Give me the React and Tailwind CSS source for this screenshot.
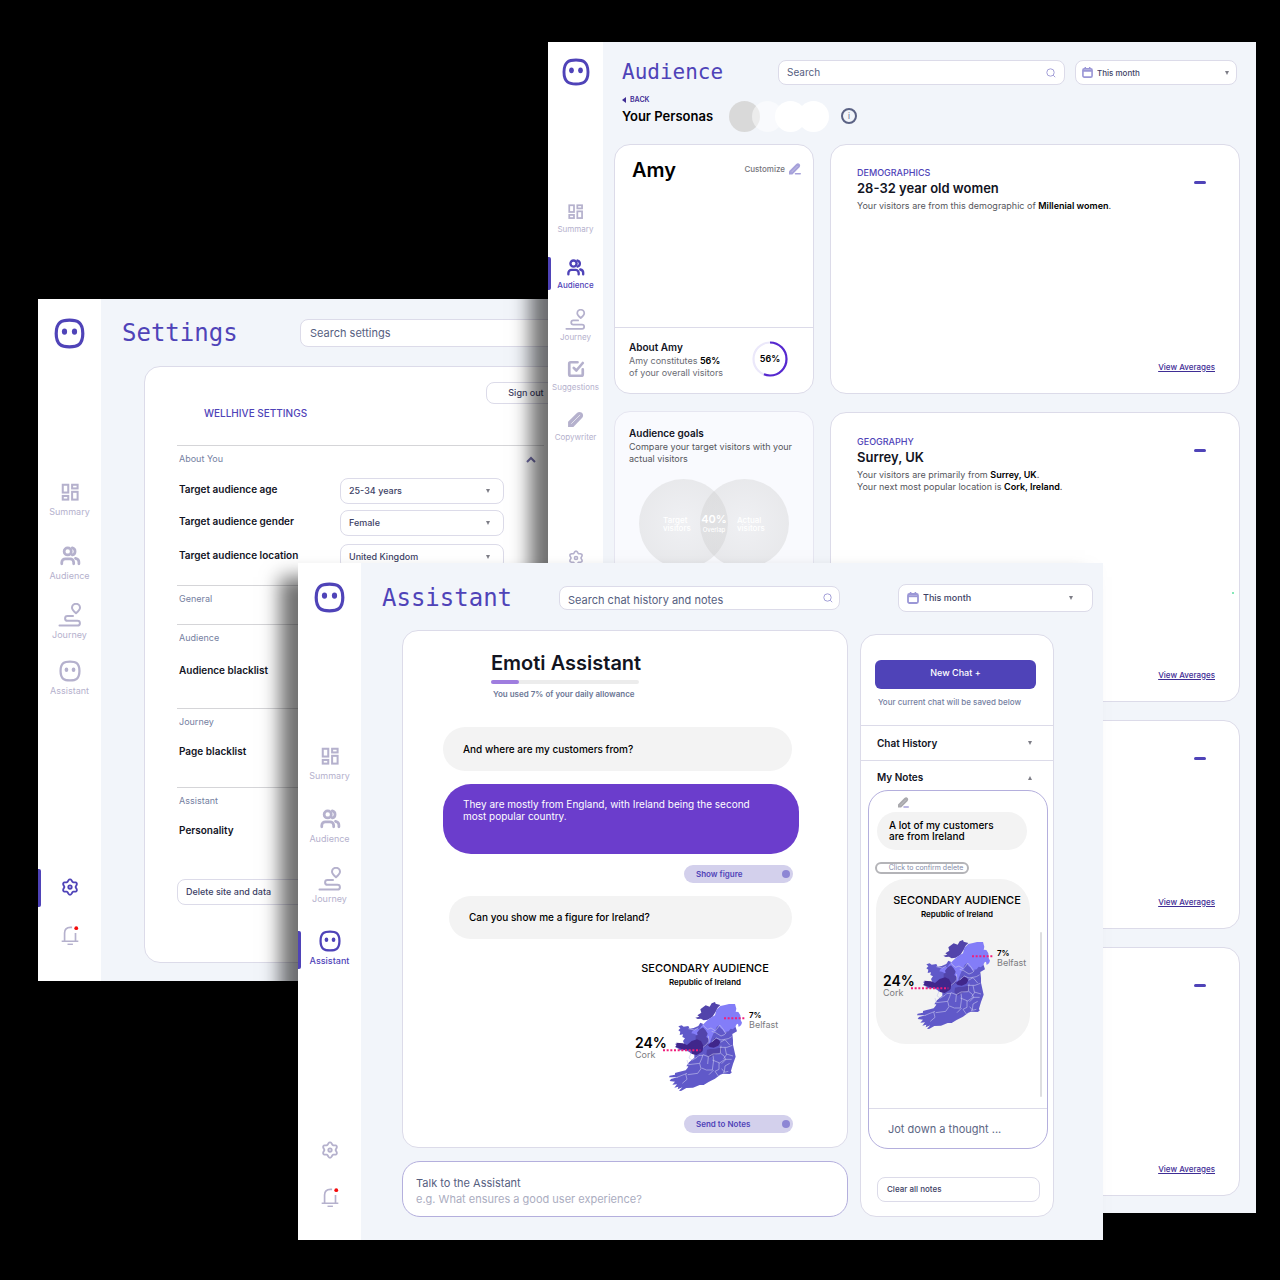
import React from "react";

/* ---------- icons ---------- */

function LogoIcon({ className }) {
  return (
    <svg viewBox="0 0 31 31" className={className} fill="none" aria-hidden="true">
      <path
        d="M15.500 2.200C19.500 2.200 22.500 2.400 25 4.500C28 7 28.800 10.500 28.800 15.500S28 24 25 26.500C22.500 28.600 19.500 28.800 15.500 28.800S8.500 28.600 6 26.500C3 24 2.200 20.500 2.200 15.500S3 7 6 4.500C8.500 2.400 11.500 2.200 15.500 2.200Z"
        stroke="currentColor"
        strokeWidth="3.200"
      />
      <ellipse cx="10.500" cy="13.600" rx="2.600" ry="3.200" fill="currentColor" />
      <ellipse cx="20.500" cy="13.600" rx="2.600" ry="3.200" fill="currentColor" />
    </svg>
  );
}

function SummaryIcon({ className }) {
  return (
    <svg viewBox="0 0 24 24" className={className} fill="none" stroke="currentColor" strokeWidth="2.200" aria-hidden="true">
      <rect x="4.100" y="4.100" width="6" height="8.500" />
      <rect x="14.300" y="4.100" width="6" height="4" />
      <rect x="14.300" y="11.800" width="6" height="8.500" />
      <rect x="4.100" y="16.300" width="6" height="4" />
    </svg>
  );
}

function AudienceIcon({ className }) {
  return (
    <svg viewBox="0 0 24 24" className={className} fill="none" stroke="currentColor" strokeWidth="3" strokeLinecap="round" aria-hidden="true">
      <circle cx="9.500" cy="7" r="3.900" />
      <path d="M14.500 3.200a3.900 3.900 0 0 1 0 7.600" />
      <path d="M3 20.500V19a4 4 0 0 1 4-4h5a4 4 0 0 1 4 4v1.500" />
      <path d="M18 14.500c2.200.5 3.700 2 3.700 4v2" />
    </svg>
  );
}

function JourneyIcon({ className }) {
  return (
    <svg viewBox="0 0 24 24" className={className} fill="none" stroke="currentColor" strokeWidth="2" strokeLinecap="round" strokeLinejoin="round" aria-hidden="true">
      <path d="M18 10.300c-2.400-2.100-4-3.500-4-5.500a4 4 0 0 1 8 0c0 2-1.600 3.400-4 5.500Z" />
      <path d="M15 13H9.500a2.400 2.400 0 0 0 0 4.800h10a2.400 2.400 0 0 1 0 4.800H1.500" />
    </svg>
  );
}

function SuggestionsIcon({ className }) {
  return (
    <svg viewBox="0 0 24 24" className={className} fill="none" stroke="currentColor" strokeWidth="3.600" strokeLinecap="round" strokeLinejoin="round" aria-hidden="true">
      <path d="M14 3H5a2 2 0 0 0-2 2v14a2 2 0 0 0 2 2h14a2 2 0 0 0 2-2v-6.500" />
      <path d="m9 10.500 3.500 3.500L21 4" />
    </svg>
  );
}

function CopywriterIcon({ className }) {
  return (
    <svg viewBox="0 0 24 24" className={className} aria-hidden="true">
      <path d="M1.500 22.500v-7.500L14 2.800c2-1.900 4.800-1.900 6.500-.6l1.300 1.300c1.300 1.800 1.300 4.500-.6 6.500L9 22.500Z" fill="currentColor" />
      <path d="M6 18 18.500 5.500" stroke="#fff" strokeWidth=".9" />
    </svg>
  );
}

const GEAR = Array.from({ length: 73 }, (_, i) => {
  const t = (i * Math.PI) / 36;
  const r = 8.900 + 1.400 * Math.cos(6 * t);
  return `${i ? "L" : "M"}${(12 + r * Math.sin(t)).toFixed(2)} ${(12 - r * Math.cos(t)).toFixed(2)}`;
}).join("");

function GearIcon({ className }) {
  return (
    <svg viewBox="0 0 24 24" className={className} fill="none" stroke="currentColor" strokeWidth="2.400" strokeLinejoin="round" aria-hidden="true">
      <path d={GEAR} />
      <circle cx="12" cy="12" r="2.300" />
    </svg>
  );
}

function BellIcon({ className }) {
  return (
    <svg viewBox="0 0 24 24" className={className} fill="none" stroke="currentColor" strokeWidth="2" aria-hidden="true">
      <path d="M14.500 2.800h-2c-4.300 0-7 2.500-7 6.800V19M18.600 9.500V19M2 19.500h20" />
      <path d="M9 23.300h6.500" />
      <circle cx="19.500" cy="3.800" r="2.300" fill="#f40b0b" stroke="none" />
    </svg>
  );
}

function SearchIcon() {
  return (
    <svg viewBox="0 0 10 10" className="size-[10px] shrink-0" fill="none" stroke="#a39fd8" aria-hidden="true">
      <circle cx="4.500" cy="4.500" r="3.700" />
      <path d="m7.200 7.200 2 2" />
    </svg>
  );
}

function CalendarIcon({ className }) {
  return (
    <svg viewBox="0 0 12 12" className={className} fill="none" stroke="#9b97d6" aria-hidden="true">
      <rect x="1" y="2" width="10" height="9" rx="1.500" strokeWidth="1.800" />
      <path d="M1 4.200h10" strokeWidth="2" />
      <path d="M3.600 0v2M8.400 0v2" strokeWidth="1.600" />
    </svg>
  );
}

function PenIcon({ className, body, line }) {
  return (
    <svg viewBox="0 0 12 12" className={className} aria-hidden="true">
      <path d="M0 11.500V8.200L7 1.200C8.200.1 9.600.1 10.500 1s.9 2.300-.2 3.500L3.400 11.500Z" fill={body} />
      <path d="M2.500 9.200 8.600 3" stroke="#fff" strokeOpacity=".5" strokeWidth=".6" />
      <path d="M6.500 10.800h4.700" stroke={line} strokeWidth="1.600" strokeLinecap="round" />
    </svg>
  );
}

function Triangle({ up }) {
  return (
    <svg viewBox="0 0 4 4" className="size-1 shrink-0" aria-hidden="true">
      <path d={up ? "M0 4h4L2 0Z" : "M0 0h4L2 4Z"} fill="#7d7d86" />
    </svg>
  );
}

/* ---------- shared controls ---------- */

function SearchBox({ label, className, inputClass, icon = true }) {
  return (
    <label className={`flex min-w-0 flex-1 items-center rounded-lg border border-[#dcdbe9] bg-white ${className}`}>
      <input
        type="search"
        aria-label={label}
        placeholder={label}
        className={`min-w-0 flex-1 bg-transparent outline-none placeholder:text-[#56607f] placeholder:opacity-100 ${inputClass}`}
      />
      {icon && <SearchIcon />}
    </label>
  );
}

function PeriodSelect({ className, iconClass }) {
  return (
    <label className={`flex items-center rounded-lg border border-[#dcdbe9] bg-white ${className}`}>
      <CalendarIcon className={iconClass} />
      <select aria-label="Period" className="min-w-0 flex-1 appearance-none bg-transparent font-medium text-[#3d4165] outline-none">
        <option>This month</option>
      </select>
      <Triangle />
    </label>
  );
}

function Sidebar({ items, className, logoClass, itemClass, iconBox, labelClass }) {
  return (
    <nav className={`flex shrink-0 flex-col items-center bg-white ${className}`}>
      <LogoIcon className={`text-[#4f43b8] ${logoClass}`} />
      {items.map(({ name, Icon, gap, icon, active, hideLabel }) => (
        <a
          key={name}
          href="#"
          aria-label={name}
          className={`relative flex w-full flex-col items-center ${gap} ${itemClass} ${active ? "text-[#4f43b8]" : "text-[#b5b1cd]"}`}
        >
          {active && <span className={`absolute left-0 w-[3px] rounded-r-xs bg-[#4f43b8] ${active}`} />}
          <span className={`flex items-center justify-center ${iconBox}`}>
            <Icon className={icon} />
          </span>
          {!hideLabel && <span className={`${labelClass} ${active ? "font-medium" : ""}`}>{name}</span>}
        </a>
      ))}
    </nav>
  );
}

/* ---------- map figure ---------- */

function IrelandMap() {
  return (
    <svg viewBox="60 45 216 276" className="h-[92px] w-[72px] overflow-visible" role="img" aria-label="Map of Ireland">
      <path
        fill="#6059c9"
        d="M82 127l10-3 6 4 14-2 4 8 12-2 14-6 6-10 14 6 12-14 60-28 20 50 4 12-14 8 2 18 0 14 4 18 4 18-8 22-6 20 2 6-6 4-20-1-8 3-16 12-18 9-16 10-12 0-20 8-20 1-16 9-6-1 10-10-14 6 2-8-12 3 8-10-14 1 8-9-16-2 4-6 22-6-12 1-16 0 2-5 16-3 0-5 8-2 24-6 6-8 2-4-6 0 8-12 16-14 0-10-10-2-6-6-12-4-18 0 0-4-12-6 6-2-6-8 14 2 16 4-6-14 6-8-8-4 2-8-10 2 2-10-6-4 6-6Z"
      />
      <path fill="#5244ab" d="M133 101l12-3-6-4 12-8-3-10 16-12 12 4 6-10 10-4 2 5 14 4-8 8-6 12-10 16-14 8-12 2-8-5-10 1Z" />
      <path
        fill="#837df8"
        d="M166 112l12-10 14-8 4-16 12-12 14-3 12-3 18 0 4 14-2 9 8 1 6 10 1 14 4 8-3 8-7 5-2-10-4 2-6 10-6 5-6-2-6 8-10 2-2 3-6-10-6-4-6-9-6 5-4 8 4 4-8 4-6 14-4 10 0 12-6 4-10-10 0-18-4-10-12 0-6 8-12-6-8-1 4-8 10-4 10-1 6-8Z"
      />
      <path fill="#5244ab" d="M138 146l8-10 10-6 8 9 6 10-4 10 8 6-2 16-8 6-4 4-8-8-4-12-14-4 0-12 6-2Z" />
      <path fill="#40268b" d="M76 176l20 2 12 5 14-12 16-5 12 5 7 14-2 16-4 4-14 8-14-3-2-11-14-2-10 0-16-6-8-3 4-5Z" />
      <path fill="#40268b" d="M178 176l9-5 4-8 12 4 5 8-6 10-14 6-12-2-6-6Z" />
      <path fill="#5244ab" d="M168 197l10-2 12 0 16-4 8 2-6 14-14 4-18 10-10-10Z" />
      <g fill="none" stroke="#c8c6ee" strokeWidth="1.800" strokeLinejoin="round">
        <path d="M154 118l6 10 10 8 10-4 12 8 8-8 6-9 10 12 8 12M182 142l12 4 16 10 10-4 6-6M182 174l14-12 14 6 22-4 10-6M112 134l18 4 12-6M156 190l10-8 8-10-2-16M208 175l14-8 14 16M210 185l-2 22 12 10 4 10-12 12M206 190l22 0 16-6M222 190l4 20 20 6M120 208l-6 14 10 6 14-8 6-6 12 0M108 228l4 14 34-4 4 16-10 14-30 4M146 238l6-14 4-12 16 6 14-8 22-1M152 252l14 6 18 0 4-30-2-14M184 228l20 8 0 20-12 6 10 14M204 238l18-12 20 0M212 254l8 10 2-18 14-8M216 266l16-4M78 280l30-12M104 270l4 16-14 12M188 258l-14 14M172 218l-2 22M228 210l-10 14" />
      </g>
      <g stroke="#f01f7c" strokeWidth="6" strokeDasharray="6 5">
        <path d="M36 199h112M219 103h66" />
      </g>
    </svg>
  );
}

function AudienceFigure({ mapClass }) {
  return (
    <figure className="h-[165px] w-[154px] pt-3 text-black">
      <figcaption className="pl-2 text-center">
        <span className="block whitespace-nowrap text-[11px] leading-[18px] font-medium">SECONDARY AUDIENCE</span>
        <span className="block text-[8px] leading-[10px] font-semibold">Republic of Ireland</span>
      </figcaption>
      <div className={`relative w-[72px] ${mapClass}`}>
        <IrelandMap />
        <p className="absolute top-[36px] -left-9">
          <span className="block text-[14px] leading-[15px] font-semibold">24%</span>
          <span className="block text-[9px] leading-[10px] text-[#7b7b80]">Cork</span>
        </p>
        <p className="absolute top-3 left-[78px]">
          <span className="block text-[8px] leading-[9px] font-semibold">7%</span>
          <span className="block text-[9px] leading-[9px] text-[#7b7b80]">Belfast</span>
        </p>
      </div>
    </figure>
  );
}

/* ---------- settings window ---------- */

const smallItem = "h-10 text-[9px]";

const settingsNav = [
  { name: "Summary", Icon: SummaryIcon, gap: "mt-[131px]", icon: "size-[22px]" },
  { name: "Audience", Icon: AudienceIcon, gap: "mt-6", icon: "size-[22px]" },
  { name: "Journey", Icon: JourneyIcon, gap: "mt-[19px]", icon: "size-6" },
  { name: "Assistant", Icon: LogoIcon, gap: "mt-4", icon: "size-[22px]" },
  { name: "Settings", Icon: GearIcon, gap: "mt-[176px]", icon: "size-[18px]", active: "-top-[6px] h-[38px]", hideLabel: true },
  { name: "Notifications", Icon: BellIcon, gap: "mt-2", icon: "size-5", hideLabel: true },
];

function SettingSelect({ id, value }) {
  return (
    <span className="flex h-[26px] w-[164px] items-center rounded-lg border border-[#dcdbe9] bg-white pr-[13px] pb-px pl-2">
      <select id={id} className="min-w-0 flex-1 appearance-none bg-transparent text-[9px] font-medium text-[#3d4165] outline-none">
        <option>{value}</option>
      </select>
      <Triangle />
    </span>
  );
}

function SettingRow({ id, label, value, className }) {
  return (
    <div className={`flex items-center ${className}`}>
      <label htmlFor={id} className="w-[161px] shrink-0 pb-1 text-[10px] leading-4 font-semibold whitespace-nowrap">
        {label}
      </label>
      <SettingSelect id={id} value={value} />
    </div>
  );
}

function SettingSection({ title, className, children, open }) {
  return (
    <section className={`border-t border-[#d5d5d8] pl-[2px] ${className}`}>
      <h3 className="flex items-center justify-between pr-2 text-[9px] leading-[26px] text-[#75809f]">
        {title}
        {open && (
          <svg viewBox="0 0 10 7" className="h-[7px] w-[10px]" fill="none" stroke="#6f6ba5" strokeWidth="2" aria-hidden="true">
            <path d="m1 6 4-4 4 4" />
          </svg>
        )}
      </h3>
      {children}
    </section>
  );
}

function SettingsWindow() {
  return (
    <section className="absolute top-[299px] right-[660px] left-[38px] flex bg-[#f2f5fa]">
      <Sidebar
        items={settingsNav}
        className="w-[63px] pt-[19px]"
        logoClass="size-[31px]"
        itemClass={smallItem}
        iconBox="h-6"
        labelClass="leading-4"
      />
      <div className="min-w-0 flex-1 pt-5 pb-[18px]">
        <header className="flex h-7 items-center pl-[21px]">
          <h1 className="w-[178px] shrink-0 font-['DejaVu_Sans_Mono',monospace] text-[24px] text-[#4f43b8]">Settings</h1>
          <SearchBox label="Search settings" className="h-7 px-[9px]" inputClass="text-[11px]" icon={false} />
        </header>
        <div className="mx-[43px] mt-[19px] flex flex-col rounded-2xl border border-[#dcdbe9] bg-white px-8 pt-[15px] pb-[57px] text-[#12141f]">
          <button className="-mr-[22px] h-[22px] w-20 self-end rounded-lg border border-[#dcdbe9] text-[9px] font-medium text-[#3d4165]">
            Sign out
          </button>
          <h2 className="mt-px ml-[27px] text-[10px] leading-4 font-medium text-[#4f43b8]">WELLHIVE SETTINGS</h2>
          <SettingSection title="About You" className="mt-6 pb-[15px]" open>
            <SettingRow id="age" label="Target audience age" value="25-34 years" className="mt-[6px]" />
            <SettingRow id="gender" label="Target audience gender" value="Female" className="mt-[6px]" />
            <SettingRow id="location" label="Target audience location" value="United Kingdom" className="mt-2" />
          </SettingSection>
          <SettingSection title="General" className="pb-3" />
          <SettingSection title="Audience" className="pb-[30px]">
            <h4 className="mt-[11px] text-[10px] leading-4 font-semibold">Audience blacklist</h4>
          </SettingSection>
          <SettingSection title="Journey" className="pb-7">
            <h4 className="mt-2 text-[10px] leading-4 font-semibold">Page blacklist</h4>
          </SettingSection>
          <SettingSection title="Assistant" className="pb-[41px]">
            <h4 className="mt-2 text-[10px] leading-4 font-semibold">Personality</h4>
          </SettingSection>
          <button className="h-[26px] rounded-lg border border-[#dcdbe9] px-2 text-left text-[9px] font-medium text-[#3d4165]">
            Delete site and data
          </button>
        </div>
      </div>
    </section>
  );
}

/* ---------- audience window ---------- */

const audienceNav = [
  { name: "Summary", Icon: SummaryIcon, gap: "mt-[115px]", icon: "size-[19px]" },
  { name: "Audience", Icon: AudienceIcon, gap: "mt-5", icon: "size-[19px]", active: "top-0 h-[33px]" },
  { name: "Journey", Icon: JourneyIcon, gap: "mt-4", icon: "size-[21px]" },
  { name: "Suggestions", Icon: SuggestionsIcon, gap: "mt-[14px]", icon: "size-[18px]" },
  { name: "Copywriter", Icon: CopywriterIcon, gap: "mt-[14px]", icon: "size-[17px]" },
  { name: "Settings", Icon: GearIcon, gap: "mt-[103px]", icon: "size-[16px]", hideLabel: true },
];

function InsightCard({ topic, title, className, children }) {
  return (
    <article className={`relative flex flex-col rounded-2xl border border-[#dcdbe9] bg-white pr-6 pl-[26px] ${className}`}>
      {topic && (
        <>
          <h3 className="text-[9px] leading-3 font-medium text-[#4f43b8]">{topic}</h3>
          <h2 className="text-[13px] leading-[18px] font-semibold text-[#12141f]">{title}</h2>
          <div className="mt-[3px] text-[9px] leading-3 text-[#55565c]">{children}</div>
        </>
      )}
      <button aria-label="Collapse" className="absolute top-[36px] right-[33px] h-[3px] w-3 rounded-full bg-[#4f43b8]" />
      <a href="#" className="mt-auto self-end text-[8px] leading-3 font-medium text-[#3f2d95] underline">
        View Averages
      </a>
    </article>
  );
}

function AudienceWindow() {
  return (
    <section className="absolute top-[42px] right-6 left-[548px] flex bg-[#f2f5fa] shadow-[-18px_14px_18px_rgba(0,0,0,0.56)]">
      <Sidebar
        items={audienceNav}
        className="w-[55px] pt-4"
        logoClass="size-7"
        itemClass="h-9 text-[8px]"
        iconBox="h-5"
        labelClass="leading-4"
      />
      <div className="min-w-0 flex-1 pt-[18px] pb-[17px]">
        <header className="flex h-[25px] items-center pr-[19px] pl-[19px]">
          <h1 className="w-[156px] shrink-0 font-['DejaVu_Sans_Mono',monospace] text-[21px] text-[#4f43b8]">Audience</h1>
          <SearchBox label="Search" className="h-[25px] pr-2 pl-2" inputClass="text-[10px]" />
          <PeriodSelect className="ml-[10px] h-[25px] w-[162px] gap-1 pr-[7px] pl-[6px] text-[8px]" iconClass="size-[11px]" />
        </header>
        <div className="mt-[9px] flex pl-[19px]">
          <div>
            <a href="#" className="flex items-center gap-1 text-[7px] leading-3 font-semibold text-[#3f2d95]">
              <svg viewBox="0 0 4 6" className="h-[6px] w-1" aria-hidden="true">
                <path d="M4 0v6L0 3Z" fill="currentColor" />
              </svg>
              BACK
            </a>
            <h2 className="text-[13px] leading-5 font-semibold whitespace-nowrap text-black">Your Personas</h2>
          </div>
          <div className="mt-[7px] ml-4 flex -space-x-2">
            <span className="size-[31px] rounded-full bg-[#d9d9d9]" />
            <span className="size-[31px] rounded-full bg-white/50" />
            <span className="size-[31px] rounded-full bg-white" />
            <span className="size-[31px] rounded-full bg-white" />
          </div>
          <button aria-label="About personas" className="mt-[14px] ml-3 flex size-4 items-center justify-center rounded-full border-2 border-[#5b6284] text-[8px] leading-none text-[#5b6284]">
            i
          </button>
        </div>
        <div className="mt-3 flex gap-4 pr-4 pl-[11px]">
          <div className="flex w-[200px] shrink-0 flex-col gap-[17px]">
            <article className="flex h-[250px] flex-col rounded-2xl border border-[#dcdbe9] bg-white">
              <div className="flex items-start justify-between pt-[11px] pr-3 pl-[17px]">
                <h2 className="text-[20px] leading-7 font-semibold text-black">Amy</h2>
                <button className="mt-[7px] flex items-center gap-1 text-[8px] leading-3 font-medium text-[#75757b]">
                  Customize
                  <PenIcon className="size-3" body="#a6a1da" line="#a6a1da" />
                </button>
              </div>
              <div className="mt-auto flex items-center justify-between border-t border-[#dcdbe9] pt-[11px] pr-[25px] pb-[14px] pl-[14px]">
                <div>
                  <h3 className="text-[10px] leading-4 font-semibold text-[#12141f]">About Amy</h3>
                  <p className="text-[9px] leading-3 whitespace-nowrap text-[#6a6b73]">
                    Amy constitutes <b className="font-semibold text-black">56%</b>
                    <br />
                    of your overall visitors
                  </p>
                </div>
                <div className="flex size-9 items-center justify-center text-[9px] font-semibold text-black">
                  <svg viewBox="0 0 36 36" className="absolute size-9" fill="none" strokeWidth="2.200" aria-hidden="true">
                    <circle cx="18" cy="18" r="16.500" stroke="#ebe8fa" />
                    <circle cx="18" cy="18" r="16.500" stroke="#5628cf" pathLength="100" strokeDasharray="56 44" transform="rotate(-90 18 18)" />
                  </svg>
                  56%
                </div>
              </div>
            </article>
            <article className="flex h-[250px] flex-col rounded-2xl border border-[#e6e6f1] bg-[#f9fafe] px-[14px] pt-[13px]">
              <h3 className="text-[10px] leading-4 font-semibold text-[#12141f]">Audience goals</h3>
              <p className="text-[9px] leading-3 text-[#55565c]">Compare your target visitors with your actual visitors</p>
              <div className="relative mt-[14px] ml-[10px] flex -space-x-7 self-start text-[8px] leading-[8px] font-medium text-white">
                <div className="flex size-[89px] items-center rounded-full bg-[radial-gradient(circle,rgba(200,200,200,0.2),rgba(200,200,200,0.4))] pl-6">
                  <p>
                    Target
                    <br />
                    visitors
                  </p>
                </div>
                <div className="flex size-[89px] items-center rounded-full bg-[radial-gradient(circle,rgba(200,200,200,0.2),rgba(200,200,200,0.4))] pl-[37px]">
                  <p>
                    Actual
                    <br />
                    visitors
                  </p>
                </div>
                <p className="absolute top-[33px] left-[61px] w-7 text-center text-[6px]">
                  <b className="block text-[11px] leading-[14px] font-semibold">40%</b>
                  Overlap
                </p>
              </div>
            </article>
          </div>
          <div className="flex min-w-0 flex-1 flex-col gap-[18px]">
            <InsightCard topic="DEMOGRAPHICS" title="28-32 year old women" className="h-[250px] pt-[22px] pb-5">
              Your visitors are from this demographic of <b className="font-semibold text-black">Millenial women</b>.
            </InsightCard>
            <InsightCard topic="GEOGRAPHY" title="Surrey, UK" className="h-[290px] pt-[23px] pb-5">
              Your visitors are primarily from <b className="font-semibold text-black">Surrey, UK</b>.
              <br />
              Your next most popular location is <b className="font-semibold text-black">Cork, Ireland</b>.
              <span className="absolute top-[179px] right-[5px] size-[2px] rounded-full bg-[#5ee0a0]" />
            </InsightCard>
            <InsightCard className="h-[209px] pb-5" />
            <InsightCard className="h-[249px] pb-5" />
          </div>
        </div>
      </div>
    </section>
  );
}

/* ---------- assistant window ---------- */

const assistantNav = [
  { name: "Summary", Icon: SummaryIcon, gap: "mt-[131px]", icon: "size-[22px]" },
  { name: "Audience", Icon: AudienceIcon, gap: "mt-[23px]", icon: "size-[22px]" },
  { name: "Journey", Icon: JourneyIcon, gap: "mt-5", icon: "size-6" },
  { name: "Assistant", Icon: LogoIcon, gap: "mt-[22px]", icon: "size-[22px]", active: "top-[2px] h-[38px]" },
  { name: "Settings", Icon: GearIcon, gap: "mt-[169px]", icon: "size-[18px]", hideLabel: true },
  { name: "Notifications", Icon: BellIcon, gap: "mt-[7px]", icon: "size-5", hideLabel: true },
];

function PillAction({ className, children }) {
  return (
    <button className={`flex h-[18px] w-[109px] items-center justify-between self-end rounded-full bg-[#d3d0ec] pr-[3px] pl-3 text-[8px] font-semibold text-[#4f43b8] ${className}`}>
      {children}
      <span className="size-2 rounded-full bg-[#8d86d4]" />
    </button>
  );
}

function ChatPanel() {
  return (
    <section className="flex flex-col rounded-2xl border border-[#dcdbe9] bg-white pt-[18px] pb-[14px]">
      <div className="ml-[88px] w-[148px]">
        <h2 className="text-[20px] leading-7 font-semibold whitespace-nowrap text-[#12141f]">Emoti Assistant</h2>
        <div className="mt-[3px] h-1 rounded-full bg-[#ececec]">
          <div className="h-1 rounded-full bg-[#9f7ddf]" style={{ width: "19%" }} />
        </div>
        <p className="mt-1 pl-[2px] text-[8px] leading-3 font-semibold whitespace-nowrap text-[#6a7695]">You used 7% of your daily allowance</p>
      </div>
      <p className="mt-[27px] mr-[55px] ml-10 flex min-h-[44px] items-center rounded-[22px] bg-[#f3f3f3] px-5 text-[10px] font-medium text-black">
        And where are my customers from?
      </p>
      <p className="mt-[13px] mr-12 ml-10 min-h-[70px] rounded-[28px] bg-[#6b3dcc] px-5 pt-[14px] text-[10px] leading-3 text-white">
        They are mostly from England, with Ireland being the second
        <br />
        most popular country.
      </p>
      <PillAction className="mt-[11px] mr-[54px]">Show figure</PillAction>
      <p className="mt-[13px] mr-[55px] ml-[46px] flex min-h-[43px] items-center rounded-[22px] bg-[#f3f3f3] px-5 text-[10px] font-medium text-black">
        Can you show me a figure for Ireland?
      </p>
      <div className="mt-2 mr-[69px] self-end">
        <AudienceFigure mapClass="mt-3 ml-[47px]" />
      </div>
      <PillAction className="mt-[3px] mr-[54px]">Send to Notes</PillAction>
    </section>
  );
}

function NotesPanel() {
  return (
    <aside className="mt-1 flex w-[194px] shrink-0 flex-col self-start rounded-2xl border border-[#dcdbe9] bg-white pt-[25px] pb-[14px] text-[#12141f]">
      <button className="mr-[17px] ml-[14px] h-[29px] rounded-md bg-[#4f43b8] pb-1 text-[9px] font-medium text-white">New Chat +</button>
      <p className="mt-[5px] ml-[17px] text-[8px] leading-4 font-medium whitespace-nowrap text-[#75809f]">Your current chat will be saved below</p>
      <button className="mt-[15px] flex h-[36px] items-center justify-between border-y border-[#dcdbe9] pr-[21px] pl-4 text-[10px] font-semibold">
        Chat History
        <Triangle />
      </button>
      <button className="flex h-[29px] items-center justify-between pt-1 pr-[21px] pl-4 text-[10px] font-semibold">
        My Notes
        <Triangle up />
      </button>
      <div className="relative mr-[5px] ml-[7px] flex flex-col rounded-[20px] border border-[#b4afdd] pt-[6px]">
        <button aria-label="Edit note" className="ml-[29px] self-start">
          <PenIcon className="size-[11px]" body="#a9a9ad" line="#a6a1da" />
        </button>
        <p className="mt-1 ml-2 flex min-h-[38px] w-[150px] items-center rounded-[19px] bg-[#f3f3f3] pl-3 text-[10px] leading-[11px] font-medium text-black">
          A lot of my customers
          <br />
          are from Ireland
        </p>
        <button className="mt-3 ml-[6px] h-3 w-[94px] rounded-full border-2 border-[#b4b4b8] pl-2 text-[7px] leading-[8px] text-[#8289a6]">
          Click to confirm delete
        </button>
        <div className="mt-[5px] ml-[7px] w-[154px] rounded-[30px] bg-[#f3f3f3]">
          <AudienceFigure mapClass="mt-[18px] ml-[43px]" />
        </div>
        <span className="absolute top-[141px] right-[5px] h-[165px] w-[2px] rounded-full bg-[#dedee0]" />
        <input
          aria-label="Jot down a thought"
          placeholder="Jot down a thought ..."
          className="mt-[64px] h-10 w-full border-t border-[#dcdbe9] bg-transparent px-[19px] text-[11px] outline-none placeholder:text-[#5c6684] placeholder:opacity-100"
        />
      </div>
      <button className="mt-7 mr-[13px] ml-4 h-[25px] rounded-lg border border-[#dcdbe9] px-[9px] pb-[2px] text-left text-[8px] font-medium text-[#3d4165]">
        Clear all notes
      </button>
    </aside>
  );
}

function AssistantWindow() {
  return (
    <section className="absolute top-[563px] right-[177px] left-[298px] flex bg-[#f2f5fa] shadow-[-18px_14px_18px_rgba(0,0,0,0.56)]">
      <Sidebar
        items={assistantNav}
        className="w-[63px] pt-[19px]"
        logoClass="size-[31px]"
        itemClass={smallItem}
        iconBox="h-6"
        labelClass="leading-4"
      />
      <div className="min-w-0 flex-1 pt-[21px] pb-[23px]">
        <header className="flex h-7 items-center pr-[10px] pl-[21px]">
          <h1 className="w-[177px] shrink-0 font-['DejaVu_Sans_Mono',monospace] text-[24px] text-[#4f43b8]">Assistant</h1>
          <SearchBox label="Search chat history and notes" className="h-6 pr-[6px] pl-2" inputClass="pt-1 text-[11px]" />
          <PeriodSelect className="ml-[58px] h-7 w-[195px] gap-1 pr-[19px] pl-2 text-[9px]" iconClass="size-3" />
        </header>
        <div className="mt-[18px] flex gap-3 pr-[49px] pl-[41px]">
          <div className="flex min-w-0 flex-1 flex-col gap-[13px]">
            <ChatPanel />
            <label className="flex h-[56px] flex-col justify-center rounded-[18px] border border-[#b4afdd] bg-white px-[13px] pt-[3px] text-[11px] leading-4 text-[#56607f]">
              Talk to the Assistant
              <input
                placeholder="e.g. What ensures a good user experience?"
                className="h-4 bg-transparent outline-none placeholder:text-[#abadbf] placeholder:opacity-100"
              />
            </label>
          </div>
          <NotesPanel />
        </div>
      </div>
    </section>
  );
}

export default function App() {
  return (
    <main className="relative min-h-screen overflow-hidden bg-black font-['Inter',sans-serif]">
      <SettingsWindow />
      <AudienceWindow />
      <AssistantWindow />
    </main>
  );
}
